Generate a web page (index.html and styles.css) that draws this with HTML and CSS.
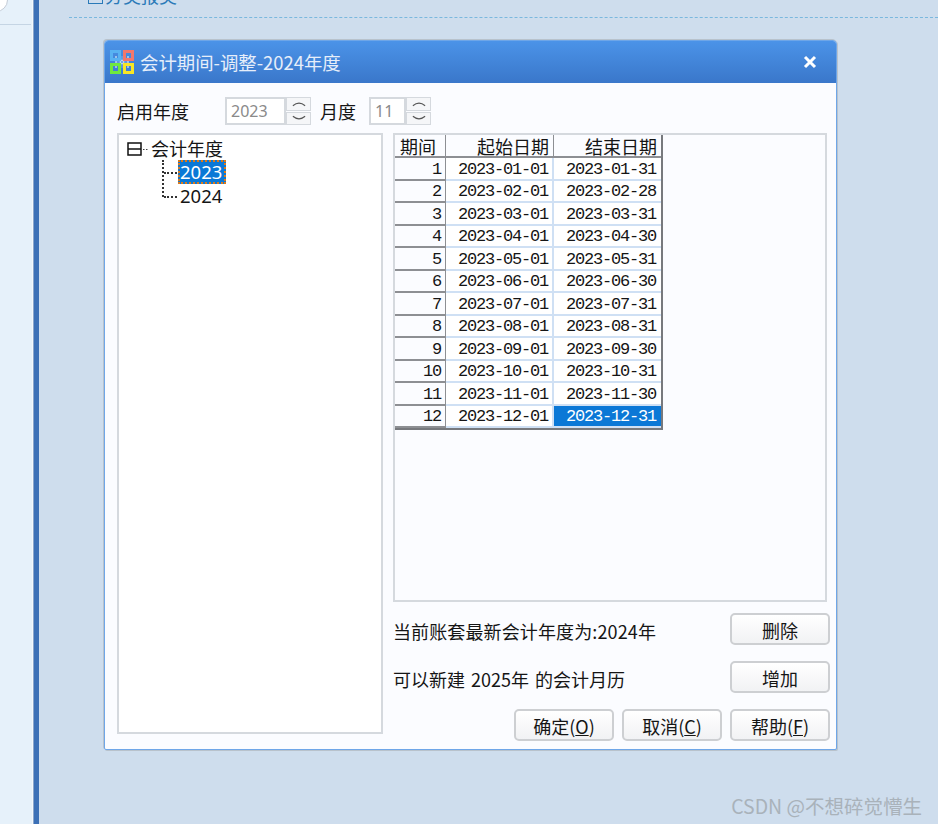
FILE: index.html
```html
<!DOCTYPE html>
<html lang="zh">
<head>
<meta charset="utf-8">
<title>会计期间-调整-2024年度</title>
<link rel="stylesheet" href="styles.css">
</head>
<body>
<aside class="sidebar">
  <div class="side-knob"></div>
  <div class="side-line"></div>
</aside>
<div class="bar"></div>
<main class="main">
  <div class="crumb"><span class="crumb-box"></span><span class="crumb-text">分类报类</span></div>
  <div class="dashed"></div>
  <section class="dialog">
    <header class="titlebar">
      <svg class="logo" viewBox="0 0 24 24" width="24" height="24">
        <g fill="none" stroke-width="3">
          <path stroke="#b9d4ee" stroke-width="1.500" d="M6 6V18M18 6V18M6 10.500H18M6 13.500H18M10.500 6V18M13.500 6V18"/>
          <rect x="1.500" y="1.500" width="8" height="8" stroke="#58b2f2"/>
          <rect x="14.500" y="1.500" width="8" height="8" stroke="#f2776c"/>
          <rect x="1.500" y="14.500" width="8" height="8" stroke="#6fe83e"/>
          <rect x="14.500" y="14.500" width="8" height="8" stroke="#f8e626"/>
        </g>
      </svg>
      <span class="title">会计期间-调整-2024年度</span>
      <svg class="close" viewBox="0 0 14 14" width="14" height="14"><path d="M2 2L12 12M12 2L2 12" stroke="#fff" stroke-width="3" fill="none"/></svg>
    </header>
    <div class="body">
      <div class="toprow">
        <span class="label label-year">启用年度</span>
        <div class="spin spin-year">
          <span class="spin-value">2023</span>
          <div class="spin-btns">
            <span class="spin-btn"><svg viewBox="0 0 16 6" width="14" height="6"><path d="M1 5Q8 -1 15 5" fill="none" stroke="#555" stroke-width="1.200"/></svg></span>
            <span class="spin-btn"><svg viewBox="0 0 16 6" width="14" height="6"><path d="M1 1Q8 7 15 1" fill="none" stroke="#555" stroke-width="1.200"/></svg></span>
          </div>
        </div>
        <span class="label label-month">月度</span>
        <div class="spin spin-month">
          <span class="spin-value">11</span>
          <div class="spin-btns">
            <span class="spin-btn"><svg viewBox="0 0 16 6" width="14" height="6"><path d="M1 5Q8 -1 15 5" fill="none" stroke="#555" stroke-width="1.200"/></svg></span>
            <span class="spin-btn"><svg viewBox="0 0 16 6" width="14" height="6"><path d="M1 1Q8 7 15 1" fill="none" stroke="#555" stroke-width="1.200"/></svg></span>
          </div>
        </div>
      </div>
      <div class="columns">
        <div class="tree">
          <div class="tree-root">
            <svg class="tree-toggle" viewBox="0 0 24 14" width="24" height="14"><path d="M1 1H14V13H1ZM1 7H14" fill="none" stroke="#111" stroke-width="1.500"/><path d="M16 7.500H22" stroke="#444" stroke-dasharray="1.500 1.500"/></svg>
            <span class="tree-label">会计年度</span>
          </div>
          <div class="tree-kids">
            <div class="tree-kid"><span class="tree-year selected">2023</span></div>
            <div class="tree-kid"><span class="tree-year">2024</span></div>
          </div>
        </div>
        <div class="right">
          <div class="gridpanel">
            <div class="grid">
              <div class="cell head">期间</div><div class="cell head">起始日期</div><div class="cell head">结束日期</div>
              <div class="cell rowh">1</div><div class="cell">2023-01-01</div><div class="cell">2023-01-31</div>
              <div class="cell rowh">2</div><div class="cell">2023-02-01</div><div class="cell">2023-02-28</div>
              <div class="cell rowh">3</div><div class="cell">2023-03-01</div><div class="cell">2023-03-31</div>
              <div class="cell rowh">4</div><div class="cell">2023-04-01</div><div class="cell">2023-04-30</div>
              <div class="cell rowh">5</div><div class="cell">2023-05-01</div><div class="cell">2023-05-31</div>
              <div class="cell rowh">6</div><div class="cell">2023-06-01</div><div class="cell">2023-06-30</div>
              <div class="cell rowh">7</div><div class="cell">2023-07-01</div><div class="cell">2023-07-31</div>
              <div class="cell rowh">8</div><div class="cell">2023-08-01</div><div class="cell">2023-08-31</div>
              <div class="cell rowh">9</div><div class="cell">2023-09-01</div><div class="cell">2023-09-30</div>
              <div class="cell rowh">10</div><div class="cell">2023-10-01</div><div class="cell">2023-10-31</div>
              <div class="cell rowh">11</div><div class="cell">2023-11-01</div><div class="cell">2023-11-30</div>
              <div class="cell rowh">12</div><div class="cell">2023-12-01</div><div class="cell current">2023-12-31</div>
            </div>
          </div>
          <div class="action-row">
            <span class="note">当前账套最新会计年度为:2024年</span>
            <button class="btn">删除</button>
          </div>
          <div class="action-row">
            <span class="note note-spaced">可以新建 2025年 的会计月历</span>
            <button class="btn">增加</button>
          </div>
          <div class="footer-row">
            <button class="btn">确定(<u>O</u>)</button>
            <button class="btn">取消(<u>C</u>)</button>
            <button class="btn">帮助(<u>F</u>)</button>
          </div>
        </div>
      </div>
    </div>
  </section>
</main>
<div class="watermark">CSDN @不想碎觉懵生</div>
</body>
</html>
```
FILE: styles.css
```css
* { box-sizing: border-box; }
html, body { height: 100%; }
body {
  margin: 0;
  width: 938px;
  height: 824px;
  overflow: hidden;
  display: flex;
  background: #cedded;
  font-family: "Noto Sans CJK SC", "Noto Sans", sans-serif;
  color: #151515;
  position: relative;
}
.sidebar {
  width: 33px;
  flex: none;
  background: #e6f1fa;
  border-right: 1px solid #f4f8fb;
  overflow: hidden;
}
.side-knob {
  width: 24px;
  height: 24px;
  margin: -12px 0 0 -16px;
  border-radius: 50%;
  background: #fff;
  border: 1px solid #c4ccd6;
}
.side-line {
  margin-top: 12px;
  height: 1px;
  width: 31px;
  background: #c5d5e4;
}
.bar {
  width: 6px;
  flex: none;
  background: #3c70b6;
  border-left: 1px solid #8aa6cc;
}
.main {
  flex: 1;
  min-width: 0;
}
.crumb {
  height: 17px;
  margin-left: 49px;
  overflow: hidden;
  display: flex;
  gap: 2px;
  color: #2a7ab8;
}
.crumb-box {
  width: 15px;
  height: 4px;
  border: 1px solid #2a7ab8;
  border-top: 0;
  flex: none;
}
.crumb-text {
  font-size: 18px;
  line-height: 18px;
  margin-top: -14px;
}
.dashed {
  height: 1px;
  margin-left: 30px;
  border-top: 1px dashed #7ab8de;
}
.dialog {
  width: 733px;
  height: 710px;
  margin: 22px 0 0 65px;
  background: #fbfcff;
  border: 1px solid #6ea6e8;
  border-radius: 4px 4px 2px 2px;
  box-shadow: -1px -1px 0 #b8c2cc, 1px 1px 0 #b8c2cc;
}
.titlebar {
  height: 42px;
  display: flex;
  align-items: center;
  padding-left: 4px;
  background: linear-gradient(#4b93e8, #3a77ca);
  border-radius: 3px 3px 0 0;
}
.logo { flex: none; margin: 0 6px 0 1px; }
.title {
  font-size: 18.400px;
  color: #e6eefa;
  flex: 1;
}
.close { margin-right: 19px; flex: none; }
.body { padding: 14px 0 0 12px; }
.toprow {
  display: flex;
  align-items: center;
  height: 28px;
}
.label { font-size: 18px; line-height: 28px; }
.label-year { width: 108px; }
.label-month { width: 49px; margin-left: 9px; }
.spin { display: flex; height: 28px; }
.spin-year { width: 86px; }
.spin-month { width: 62px; }
.spin-value {
  flex: 1;
  border: 2px solid #d5d9de;
  background: #fff;
  color: #8a8a8a;
  font-size: 16px;
  line-height: 24px;
  padding-left: 4px;
  font-family: "Noto Sans", sans-serif;
}
.spin-btns {
  width: 25px;
  display: flex;
  flex-direction: column;
  gap: 1px;
}
.spin-btn {
  flex: 1;
  border: 1px solid #d5d9de;
  background: #f5f6f8;
  display: flex;
  align-items: center;
  justify-content: center;
}
.columns {
  display: flex;
  gap: 10px;
  margin-top: 8px;
  align-items: flex-start;
}
.tree {
  width: 266px;
  height: 601px;
  flex: none;
  background: #fff;
  border: 2px solid #d5d9de;
  padding: 2px 0 0 8px;
}
.tree-root {
  display: flex;
  align-items: center;
  height: 23px;
  font-size: 18px;
}
.tree-toggle { flex: none; }
.tree-label { line-height: 23px; }
.tree-kids {
  margin-left: 35px;
  border-left: 2px dotted #333;
  height: 37px;
}
.tree-kid {
  height: 24px;
  display: flex;
  align-items: center;
  padding-left: 14px;
  position: relative;
}
.tree-kid::before {
  content: "";
  position: absolute;
  left: 0;
  top: 12px;
  width: 13px;
  border-top: 2px dotted #333;
}
.tree-year {
  font-family: "Noto Sans", sans-serif;
  font-size: 18.500px;
  line-height: 20px;
  height: 24px;
  padding: 0 2px 0 0;
  border: 2px solid transparent;
}
.tree-year.selected {
  background: #0b78d6;
  color: #fff;
  border: 2px dotted #e07a18;
}
.right { width: 437px; flex: none; }
.gridpanel {
  width: 434px;
  height: 469px;
  background: #fbfcff;
  border: 2px solid #d5d9de;
}
.grid {
  width: 268px;
  display: grid;
  grid-template-columns: 51px 108px 107px;
  grid-template-rows: 23px repeat(12, 22.500px);
  border-right: 2px solid #77797d;
  border-bottom: 2px solid #77797d;
  font-family: "Liberation Mono", monospace;
  font-size: 17px;
  letter-spacing: -1.200px;
}
.cell {
  display: flex;
  align-items: center;
  justify-content: flex-end;
  padding-right: 4px;
  padding-top: 2px;
  background: #fff;
  border-right: 2px solid #cfe0f4;
  border-bottom: 2px solid #cfe0f4;
  white-space: nowrap;
}
.cell:nth-child(3n) { border-right: 0; padding-right: 5px; }
.head {
  font-family: "Noto Sans CJK SC", sans-serif;
  font-size: 18px;
  letter-spacing: 0;
  padding-top: 0;
  background: #fbfcff;
  border-right: 1px solid #8d8f93;
  border-bottom: 2px solid #8d8f93;
  padding-right: 4px;
}
.head:nth-child(3) { padding-right: 4px; }
.head:first-child { justify-content: center; padding-right: 4px; }
.rowh {
  background: #fbfcff;
  border-right: 1px solid #8d8f93;
  border-bottom: 2px solid #8d8f93;
  padding-right: 4px;
}
.current {
  background: #0b78d6;
  color: #fff;
}
.action-row {
  display: flex;
  justify-content: space-between;
  align-items: center;
  height: 32px;
  margin-top: 11px;
}
.action-row + .action-row { margin-top: 16px; }
.note { font-size: 18px; letter-spacing: 0.120px; white-space: nowrap; padding-top: 4px; }
.note-spaced { word-spacing: 2px; letter-spacing: 0; padding-top: 4px; }
.btn {
  width: 100px;
  height: 32px;
  padding: 1px 0 0;
  border: 2px solid #cdcfd2;
  border-radius: 5px;
  background: linear-gradient(#fff, #f1f2f4);
  font-family: "Noto Sans CJK SC", sans-serif;
  font-size: 18px;
  line-height: 26px;
  color: #151515;
}
.footer-row {
  display: flex;
  justify-content: flex-end;
  gap: 8px;
  margin-top: 16px;
}
.watermark {
  position: absolute;
  right: 16px;
  bottom: 6px;
  font-size: 19.500px;
  line-height: 24px;
  color: #a9b2ba;
  white-space: nowrap;
}
```
